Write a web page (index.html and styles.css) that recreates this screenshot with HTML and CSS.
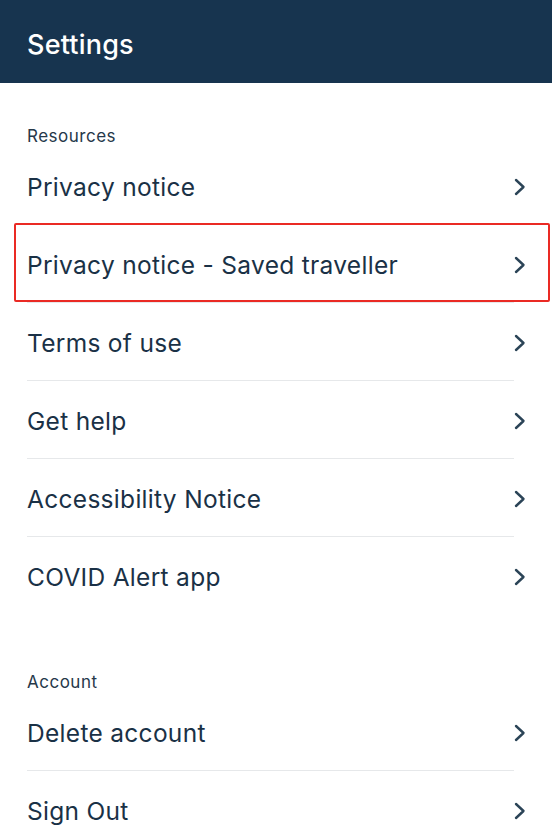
FILE: index.html
```html
<!DOCTYPE html>
<html lang="en">
<head>
    <meta charset="UTF-8">
    <meta name="viewport" content="width=device-width, initial-scale=1.0">
    <title>Settings</title>
    <link rel="stylesheet" href="styles.css">
</head>
<body>
    <div class="header">
        <h1>Settings</h1>
    </div>

    <div class="section">
        <div class="section-title">Resources</div>
        <a class="row" href="#"><span>Privacy notice</span><svg class="chevron" viewBox="0 0 14 20"><path d="M3 3l7.5 7-7.5 7"/></svg></a>
        <a class="row highlight" href="#"><span>Privacy notice - Saved traveller</span><svg class="chevron" viewBox="0 0 14 20"><path d="M3 3l7.5 7-7.5 7"/></svg></a>
        <a class="row" href="#"><span>Terms of use</span><svg class="chevron" viewBox="0 0 14 20"><path d="M3 3l7.5 7-7.5 7"/></svg></a>
        <a class="row" href="#"><span>Get help</span><svg class="chevron" viewBox="0 0 14 20"><path d="M3 3l7.5 7-7.5 7"/></svg></a>
        <a class="row" href="#"><span>Accessibility Notice</span><svg class="chevron" viewBox="0 0 14 20"><path d="M3 3l7.5 7-7.5 7"/></svg></a>
        <a class="row last" href="#"><span>COVID Alert app</span><svg class="chevron" viewBox="0 0 14 20"><path d="M3 3l7.5 7-7.5 7"/></svg></a>
    </div>

    <div class="section account">
        <div class="section-title">Account</div>
        <a class="row" href="#"><span>Delete account</span><svg class="chevron" viewBox="0 0 14 20"><path d="M3 3l7.5 7-7.5 7"/></svg></a>
        <a class="row last" href="#"><span>Sign Out</span><svg class="chevron" viewBox="0 0 14 20"><path d="M3 3l7.5 7-7.5 7"/></svg></a>
    </div>
</body>
</html>
```

FILE: styles.css
```css
/* Base */
body {
    margin: 0;
    font-family: Inter, 'Liberation Sans', Arial, sans-serif;
    color: #1a3146;
    background: #ffffff;
    overflow: hidden;
}

/* Header bar */
.header {
    background: #17344f;
    height: 83px;
    padding: 6px 27px 0 27px;
    box-sizing: border-box;
    display: flex;
    align-items: center;
}

.header h1 {
    margin: 0;
    color: #ffffff;
    font-size: 27px;
    font-weight: 500;
    letter-spacing: 0.2px;
}

/* Sections */
.section {
    padding: 0 27px 0 27px;
}

.section-title {
    font-size: 17px;
    color: #26384a;
    letter-spacing: 0.5px;
    padding-top: 42px;
    height: 22px;
    line-height: 22px;
}

.account .section-title {
    padding-top: 56px;
}

/* List rows */
.row {
    position: relative;
    display: flex;
    align-items: center;
    justify-content: space-between;
    height: 78px;
    padding-right: 13px;
    margin-right: 11px;
    border-bottom: 1px solid #e6e8ea;
    box-sizing: border-box;
    color: #1a3146;
    text-decoration: none;
    font-size: 24.5px;
    letter-spacing: 0.3px;
    padding-top: 2px;
}

.row.last {
    border-bottom: none;
}

.chevron {
    width: 14px;
    height: 20px;
    margin-right: -26px;
    fill: none;
    stroke: #2b4457;
    stroke-width: 2.4;
    stroke-linecap: round;
    stroke-linejoin: round;
}

/* Red annotation box */
.highlight::after {
    content: "";
    position: absolute;
    left: -13px;
    right: -36px;
    top: -2px;
    bottom: 0;
    border: 2px solid #ea2a24;
    border-radius: 2px;
}
```
